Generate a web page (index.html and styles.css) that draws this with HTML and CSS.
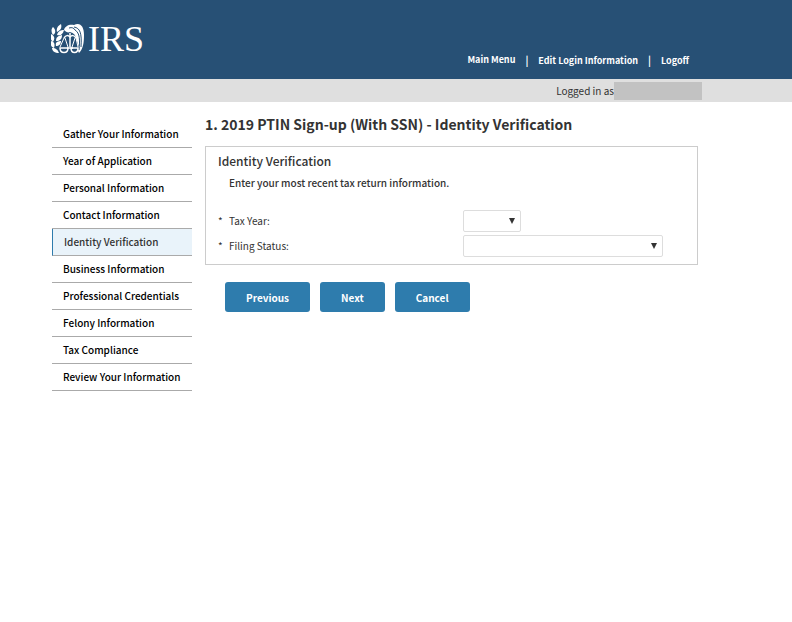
FILE: index.html
```html
<!DOCTYPE html>
<html lang="en">
<head>
  <meta charset="utf-8">
  <title>PTIN Sign-up - Identity Verification</title>
  <link rel="stylesheet" href="styles.css">
</head>
<body>
  <header class="header">
    <a class="logo" href="#" aria-label="IRS home">
      <!-- eagle and scales emblem -->
      <svg class="emblem" viewBox="0 0 34 32" aria-hidden="true">
        <g fill="#fff">
          <!-- laurel branch -->
          <path d="M6 9C5 5 7 3 10 1c1 4 0 6-4 8zM2 12C0 9 0 6 2 4c3 3 3 6 0 8zM6 12c1-4 4-5 7-5-1 4-3 6-7 5zM2 19c-3-3-3-5-2-8 4 2 4 5 2 8zM5 18c0-4 2-5 6-6 0 4-2 6-6 6zM3 25c-3-1-4-4-3-7 4 1 4 4 3 7zM5 23c-1-4 2-5 5-5 0 3-2 5-5 5zM8 30c-4 0-7-2-7-5 4 0 6 2 7 5z"/>
          <!-- head and wing -->
          <path d="M13 7c1-4 5-6 10-5 6-3 10 1 10 10 0 8-1 14-5 18l-1-2 1-4-3-9c-1-4-3-5-6-6-2 1-4 0-6-2z"/>
        </g>
        <g fill="none" stroke="#275075" stroke-width="1">
          <path d="M18 5c3-1 5 0 6 2 5 3 5 10 4 20M23 4c6 1 8 6 7 20"/>
        </g>
        <g fill="none" stroke="#fff" stroke-width="1.5">
          <!-- scales -->
          <path d="M19 10v14M16 25h6"/>
          <path d="M13 15c2-3 4-3 6-1 2-2 4-2 6 1"/>
          <path d="M13 15l-4 9M14 15l3 9M24 15l-3 9M25 15l2 9" stroke-width="1"/>
          <path d="M9 25h8c0 6-8 6-8 0zM20 25h7c0 6-7 6-7 0z"/>
        </g>
      </svg>
      <span class="logo-text">IRS</span>
    </a>
    <nav class="top-nav">
      <a href="#">Main Menu</a>
      <a href="#">Edit Login Information</a>
      <a href="#">Logoff</a>
    </nav>
  </header>

  <div class="login-bar">
    <span>Logged in as</span>
    <span class="user-name"></span>
  </div>

  <div class="container">
    <nav class="side-nav">
      <a href="#">Gather Your Information</a>
      <a href="#">Year of Application</a>
      <a href="#">Personal Information</a>
      <a href="#">Contact Information</a>
      <a href="#" class="active">Identity Verification</a>
      <a href="#">Business Information</a>
      <a href="#">Professional Credentials</a>
      <a href="#">Felony Information</a>
      <a href="#">Tax Compliance</a>
      <a href="#">Review Your Information</a>
    </nav>

    <main class="content">
      <h1>1. 2019 PTIN Sign-up (With SSN) - Identity Verification</h1>

      <form>
        <section class="panel">
          <h2>Identity Verification</h2>
          <p class="instructions">Enter your most recent tax return information.</p>

          <div class="form-row">
            <span class="required">*</span>
            <label for="taxYear">Tax Year:</label>
            <div class="select-wrap short">
              <select id="taxYear"><option></option></select>
            </div>
          </div>
          <div class="form-row">
            <span class="required">*</span>
            <label for="filingStatus">Filing Status:</label>
            <div class="select-wrap">
              <select id="filingStatus"><option></option></select>
            </div>
          </div>
        </section>

        <div class="buttons">
          <button type="button">Previous</button>
          <button type="button">Next</button>
          <button type="button">Cancel</button>
        </div>
      </form>
    </main>
  </div>
</body>
</html>
```

FILE: styles.css
```css
* {
  box-sizing: border-box;
}

body {
  margin: 0;
  background-color: #fff;
  color: #333;
  font-family: "Noto Sans CJK SC", "Open Sans", sans-serif;
  font-size: 10px;
  line-height: 16px;
}

a {
  text-decoration: none;
}

.header {
  display: flex;
  justify-content: space-between;
  align-items: flex-end;
  padding: 23px 103px 10px 51px;
  background-color: #275075;
}

.logo {
  display: flex;
  align-items: center;
  gap: 3px;
  margin-bottom: 14px;
  color: #fff;
}

.emblem {
  width: 34px;
  height: 32px;
}

.logo-text {
  font-family: "Liberation Serif", serif;
  font-size: 36px;
  line-height: 32px;
}

.top-nav {
  display: flex;
}

.top-nav a {
  color: #fff;
  font-size: 9px;
  font-weight: bold;
}

.top-nav a + a::before {
  content: "|";
  margin: 0 10px;
  font-size: 10px;
}

.login-bar {
  display: flex;
  justify-content: flex-end;
  align-items: center;
  height: 23px;
  padding-right: 90px;
  background-color: #dfdfdf;
}

.user-name {
  width: 88px;
  height: 18px;
  background-color: #c2c2c2;
}

.container {
  display: flex;
  gap: 13px;
  padding: 12px 94px 0 52px;
}

.side-nav {
  flex: none;
  width: 140px;
  padding-top: 7px;
}

.side-nav a {
  display: block;
  height: 27px;
  padding-left: 11px;
  border-bottom: 1px solid #aaa;
  color: #000;
  font-weight: 500;
  line-height: 26px;
}

.side-nav .active {
  border-left: 1px solid #2e7cad;
  background-color: #e9f3fa;
  color: #333;
}

.content {
  flex: 1;
}

h1 {
  margin: 0 0 12px;
  font-size: 14px;
  line-height: 20px;
}

.panel {
  padding: 5px 13px 7px 12px;
  border: 1px solid #ccc;
}

h2 {
  margin: 0;
  font-size: 12px;
  font-weight: 500;
  line-height: 18px;
}

.instructions {
  margin: 5px 0 19px 11px;
  font-weight: 500;
}

.form-row {
  display: flex;
  align-items: center;
}

.form-row + .form-row {
  margin-top: 3px;
}

.required {
  width: 11px;
}

.form-row label {
  width: 234px;
}

.select-wrap {
  position: relative;
  width: 200px;
}

.select-wrap.short {
  width: 58px;
}

.select-wrap::after {
  content: "";
  position: absolute;
  top: 8px;
  right: 6px;
  border: 3px solid transparent;
  border-top: 6px solid #333;
  border-bottom: 0;
  pointer-events: none;
}

select {
  display: block;
  width: 100%;
  height: 22px;
  border: 1px solid #ddd;
  border-radius: 2px;
  background-color: #fff;
  appearance: none;
}

.buttons {
  display: flex;
  gap: 10px;
  margin: 17px 0 0 20px;
}

button {
  height: 30px;
  padding: 0 21px;
  border: none;
  border-radius: 3px;
  background-color: #2e7cad;
  color: #fff;
  font-family: inherit;
  font-size: 10px;
  font-weight: bold;
  cursor: pointer;
}
```
